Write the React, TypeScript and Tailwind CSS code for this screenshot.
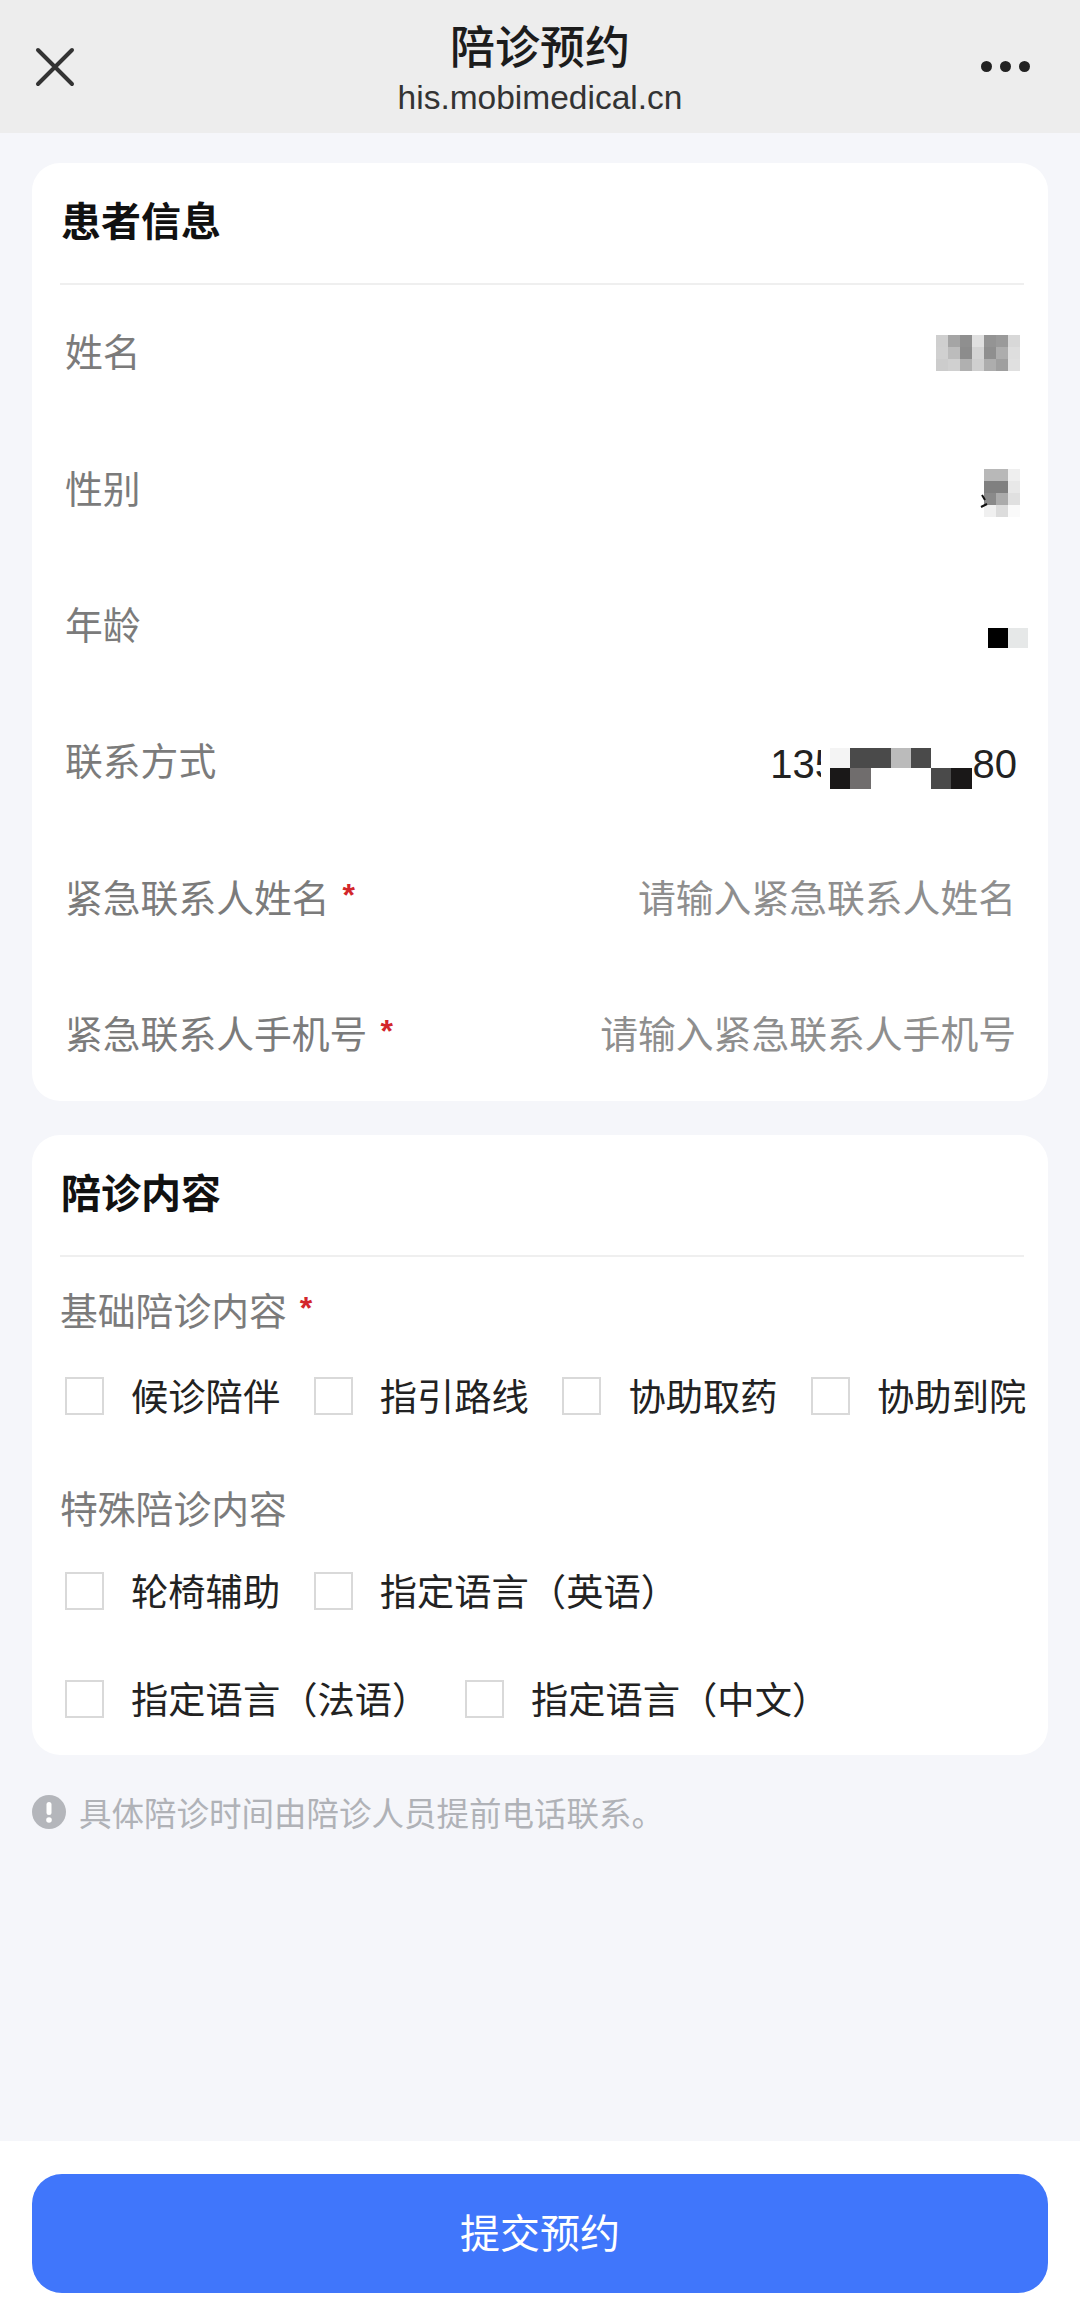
const FONT = "font-['Noto_Sans_CJK_SC','Noto_Sans',sans-serif]";

type Grid = string[][];

const NAME_BLUR: Grid = [
  ["#cfcfcf", "#a5a5a5", "#8f8f8f", "#e0e0e0", "#949494", "#9a9a9a", "#d8d8d8"],
  ["#d0d0d0", "#bcbcbc", "#8c8c8c", "#d4d4d4", "#8f8f8f", "#adadad", "#dedede"],
  ["#cccccc", "#d0d0d0", "#b0b0b0", "#cfcfcf", "#adadad", "#9f9f9f", "#e0e0e0"],
];

const GENDER_BLUR: Grid = [
  ["#b8b8b8", "#b8b8b8", "#efefef"],
  ["#808080", "#808080", "#e8e8e8"],
  ["#8a8a8a", "#ababab", "#e0e0e0"],
  ["#f0f0f0", "#dcdcdc", "#fafafa"],
];

const AGE_BLUR: Grid = [["#000000", "#e6e8e8"]];

const PHONE_BLUR: Grid = [
  ["#f4f4f4", "#4a4a4a", "#4a4a4a", "#bbbbbb", "#4a4a4a", "#ffffff", "#ffffff"],
  ["#1a1818", "#706d6d", "#ffffff", "#ffffff", "#ffffff", "#4a4a4a", "#1a1818"],
];

function Mosaic({ cells, size }: { cells: Grid; size: number }) {
  return (
    <div className="flex flex-col shrink-0">
      {cells.map((row, i) => (
        <div key={i} className="flex">
          {row.map((color, j) => (
            <div key={j} style={{ width: size, height: size, backgroundColor: color }} />
          ))}
        </div>
      ))}
    </div>
  );
}

function Star() {
  return <span className="font-['Liberation_Sans'] font-bold text-[32px] leading-none text-[#d3262b] relative top-[-1px]">*</span>;
}

function Row({ label, required, children }: { label: string; required?: boolean; children?: React.ReactNode }) {
  return (
    <div className="flex h-[136.4px] items-center justify-between pl-[5px] pr-[10px]">
      <div className="mb-[6px] flex items-center gap-[13px] text-[37.8px] leading-none text-[#7b7b7b]">
        <span>{label}</span>
        {required && <Star />}
      </div>
      {children}
    </div>
  );
}

function Placeholder({ text }: { text: string }) {
  return <span className="mr-[-2px] mb-[6px] text-[37.8px] leading-none text-[#8e8e8e]">{text}</span>;
}

function CardTitle({ text }: { text: string }) {
  return (
    <div className="flex h-[122px] items-center border-b-2 border-[#efefef] pb-[9px] pl-[1px]">
      <h2 className="text-[40px] leading-none font-bold text-[#111111]">{text}</h2>
    </div>
  );
}

function Check({ label }: { label: string }) {
  return (
    <div className="flex items-center gap-[27px]">
      <div className="h-[38px] w-[39px] shrink-0 border-2 border-[#d9d9d9] bg-white" />
      <span className="text-[37.3px] leading-none text-[#222222] whitespace-nowrap">{label}</span>
    </div>
  );
}

export default function App() {
  return (
    <div className={`flex h-[2318px] w-[1080px] flex-col overflow-hidden bg-[#f5f6fa] ${FONT}`}>
      {/* Top bar */}
      <header className="grid h-[133px] shrink-0 grid-cols-[1fr_auto_1fr] bg-[#ededed]">
        <div className="flex items-center pl-[34px]">
          <svg width="42" height="42" viewBox="0 0 42 42" fill="none" stroke="#333333" strokeWidth="4" strokeLinecap="round">
            <path d="M4 4 L38 38 M38 4 L4 38" />
          </svg>
        </div>
        <div className="flex flex-col items-center pt-[23px]">
          <h1 className="text-[45px] leading-[44px] font-medium text-[#1c1c1c]">陪诊预约</h1>
          <p className="mt-[11px] font-['Liberation_Sans'] text-[33.5px] leading-[40px] text-[#333333]">his.mobimedical.cn</p>
        </div>
        <div className="flex items-center justify-end gap-[8px] pr-[50px]">
          <span className="h-[11px] w-[11px] rounded-full bg-[#222222]" />
          <span className="h-[11px] w-[11px] rounded-full bg-[#222222]" />
          <span className="h-[11px] w-[11px] rounded-full bg-[#222222]" />
        </div>
      </header>

      <main className="flex-1 px-[32px] pt-[30px]">
        {/* Patient info */}
        <section className="h-[938px] rounded-[28px] bg-white pr-[24px] pl-[28px]">
          <CardTitle text="患者信息" />
          <Row label="姓名">
            <div className="mr-[-6px]">
              <Mosaic cells={NAME_BLUR} size={12} />
            </div>
          </Row>
          <Row label="性别">
            <div className="relative mr-[-6px] mt-[6px]">
              <Mosaic cells={GENDER_BLUR} size={12} />
              <svg width="8" height="14" viewBox="0 0 8 14" fill="none" stroke="#111111" strokeWidth="2" className="absolute left-[-4px] top-[25px]">
                <path d="M1 13 L7 10 M2 1 L5 6" />
              </svg>
            </div>
          </Row>
          <Row label="年龄">
            <div className="mr-[-14px] mt-[24px]">
              <Mosaic cells={AGE_BLUR} size={20} />
            </div>
          </Row>
          <Row label="联系方式">
            <div className="mr-[-3px] flex items-start mt-[8px] font-['Liberation_Sans'] text-[40px] leading-[40px] text-[#222222]">
              <span className="w-[51px] overflow-hidden whitespace-nowrap">135</span>
              <div className="ml-[9px] mr-[1px] mt-[4px]">
                <Mosaic cells={PHONE_BLUR} size={20.2} />
              </div>
              <span>80</span>
            </div>
          </Row>
          <Row label="紧急联系人姓名" required>
            <Placeholder text="请输入紧急联系人姓名" />
          </Row>
          <Row label="紧急联系人手机号" required>
            <Placeholder text="请输入紧急联系人手机号" />
          </Row>
        </section>

        {/* Escort content */}
        <section className="mt-[34px] h-[620px] rounded-[28px] bg-white pr-[24px] pl-[28px]">
          <CardTitle text="陪诊内容" />
          <div className="mt-[29px] flex h-[46px] items-center gap-[13px] text-[37.8px] leading-none text-[#7b7b7b]">
            <span>基础陪诊内容</span>
            <Star />
          </div>
          <div className="mt-[24px] flex h-[80px] items-center gap-[33.5px] pl-[5px]">
            <Check label="候诊陪伴" />
            <Check label="指引路线" />
            <Check label="协助取药" />
            <Check label="协助到院" />
          </div>
          <div className="mt-[44px] flex h-[54px] items-center text-[37.8px] leading-none text-[#7b7b7b]">特殊陪诊内容</div>
          <div className="mt-[17px] flex h-[80px] items-center gap-[33.5px] pl-[5px]">
            <Check label="轮椅辅助" />
            <Check label="指定语言（英语）" />
          </div>
          <div className="mt-[28px] flex h-[80px] items-center gap-[35.5px] pl-[5px]">
            <Check label="指定语言（法语）" />
            <Check label="指定语言（中文）" />
          </div>
        </section>

        <div className="mt-[40px] flex items-center gap-[13px]">
          <svg width="34" height="34" viewBox="0 0 34 34" className="shrink-0">
            <circle cx="17" cy="17" r="17" fill="#b4b6bb" />
            <rect x="14.5" y="7" width="5" height="13" rx="2.5" fill="#ffffff" />
            <circle cx="17" cy="25" r="2.8" fill="#ffffff" />
          </svg>
          <p className="text-[32.5px] leading-none text-[#b0b2b7]">具体陪诊时间由陪诊人员提前电话联系。</p>
        </div>
      </main>

      <footer className="h-[177px] shrink-0 bg-white px-[32px] pt-[33px]">
        <button className="flex h-[119px] w-full items-center justify-center rounded-[30px] bg-[#4076fb] pb-[5px] text-[40px] leading-none text-white">
          提交预约
        </button>
      </footer>
    </div>
  );
}
